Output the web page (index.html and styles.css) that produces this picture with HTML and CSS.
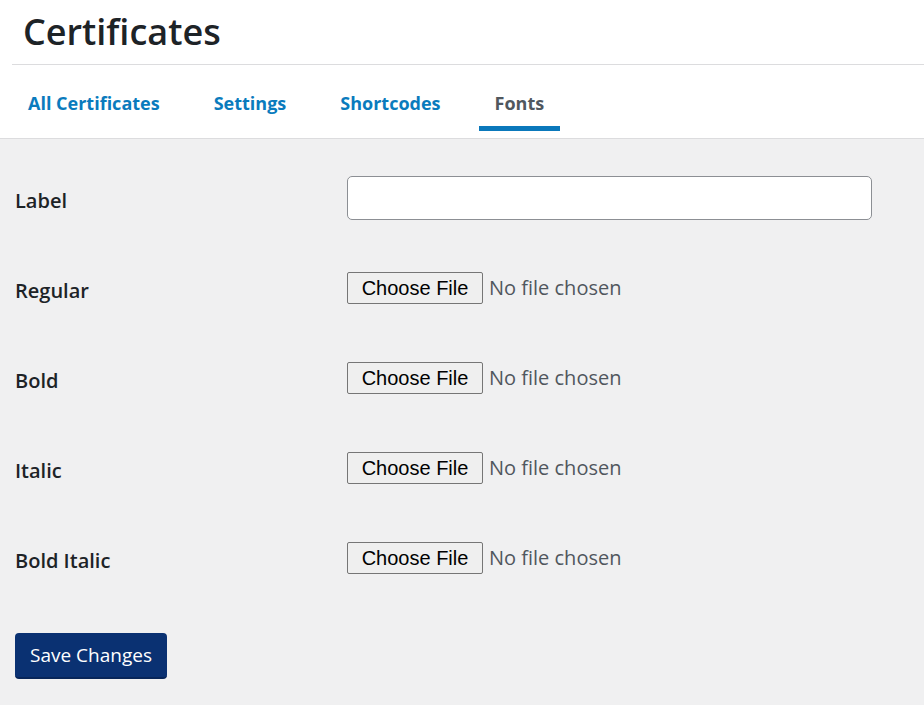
FILE: index.html
```html
<!DOCTYPE html>
<html lang="en">
<head>
    <meta charset="UTF-8">
    <title>Certificates - Fonts</title>
    <link rel="stylesheet" href="styles.css">
</head>
<body>
<div class="page_head">
    <h1 class="page_title">Certificates</h1>
    <nav class="tabs">
        <a href="#" class="tab">All Certificates</a>
        <a href="#" class="tab">Settings</a>
        <a href="#" class="tab">Shortcodes</a>
        <a href="#" class="tab tab_active">Fonts</a>
    </nav>
</div>
<form action="#" method="post" class="font_form">
    <!--名称-->
    <div class="field_row">
        <label class="field_label" for="font_label">Label</label>
        <input type="text" name="font_label" id="font_label" class="text_input">
    </div>
    <div class="field_row">
        <label class="field_label" for="font_regular">Regular</label>
        <input type="file" name="font_regular" id="font_regular" class="file_input">
    </div>
    <div class="field_row">
        <label class="field_label" for="font_bold">Bold</label>
        <input type="file" name="font_bold" id="font_bold" class="file_input">
    </div>
    <div class="field_row">
        <label class="field_label" for="font_italic">Italic</label>
        <input type="file" name="font_italic" id="font_italic" class="file_input">
    </div>
    <div class="field_row">
        <label class="field_label" for="font_bold_italic">Bold Italic</label>
        <input type="file" name="font_bold_italic" id="font_bold_italic" class="file_input">
    </div>
    <!--保存按钮-->
    <button type="submit" class="btn_save">Save Changes</button>
</form>
</body>
</html>
```

FILE: styles.css
```css
*{
    margin: 0px;
    padding: 0px;
    box-sizing: border-box;
}
body{
    background-color: #f0f0f1;
    font-family: "Open Sans", "Noto Sans", sans-serif;
    color: #1d2327;
}
.page_head{
    background-color: white;
    padding-left: 12px;
    border-bottom: 1px solid #dcdcde;
}
.page_title{
    font-size: 36px;
    font-weight: 600;
    line-height: 64px;
    padding-left: 11px;
    border-bottom: 1px solid #dcdcde;
    color: #1d2327;
}
.tabs{
    display: flex;
    gap: 22px;
    padding-top: 15px;
    padding-bottom: 7px;
}
.tab{
    padding: 0 16px;
    font-size: 18px;
    font-weight: 700;
    line-height: 46px;
    color: #0a7bbd;
    text-decoration: none;
    border-bottom: 5px solid transparent;
}
.tab_active{
    color: #50575e;
    border-bottom-color: #0a78bb;
}
.font_form{
    padding: 37px 15px 20px;
}
.field_row{
    display: flex;
    align-items: center;
    min-height: 44px;
    margin-bottom: 46px;
}
.field_label{
    width: 332px;
    flex-shrink: 0;
    padding-top: 5px;
    font-size: 20px;
    font-weight: 600;
}
.text_input{
    width: 525px;
    height: 44px;
    border: 1px solid #8c8f94;
    border-radius: 5px;
    background-color: white;
}
.file_input{
    font-family: "Open Sans", "Noto Sans", sans-serif;
    font-size: 20px;
    color: #50575e;
}
.file_input::file-selector-button{
    width: 136px;
    height: 32px;
    margin-right: 6px;
    font-family: "Liberation Sans", Arial, sans-serif;
    font-size: 20px;
    color: black;
    background-color: #efefef;
    border: 1px solid #767676;
    border-radius: 2px;
}
.btn_save{
    margin-top: 7px;
    width: 152px;
    height: 46px;
    background-color: #0a3172;
    border: none;
    border-bottom: 2px solid #072559;
    border-radius: 4px;
    color: white;
    font-family: "Open Sans", "Noto Sans", sans-serif;
    font-size: 19px;
}
```
